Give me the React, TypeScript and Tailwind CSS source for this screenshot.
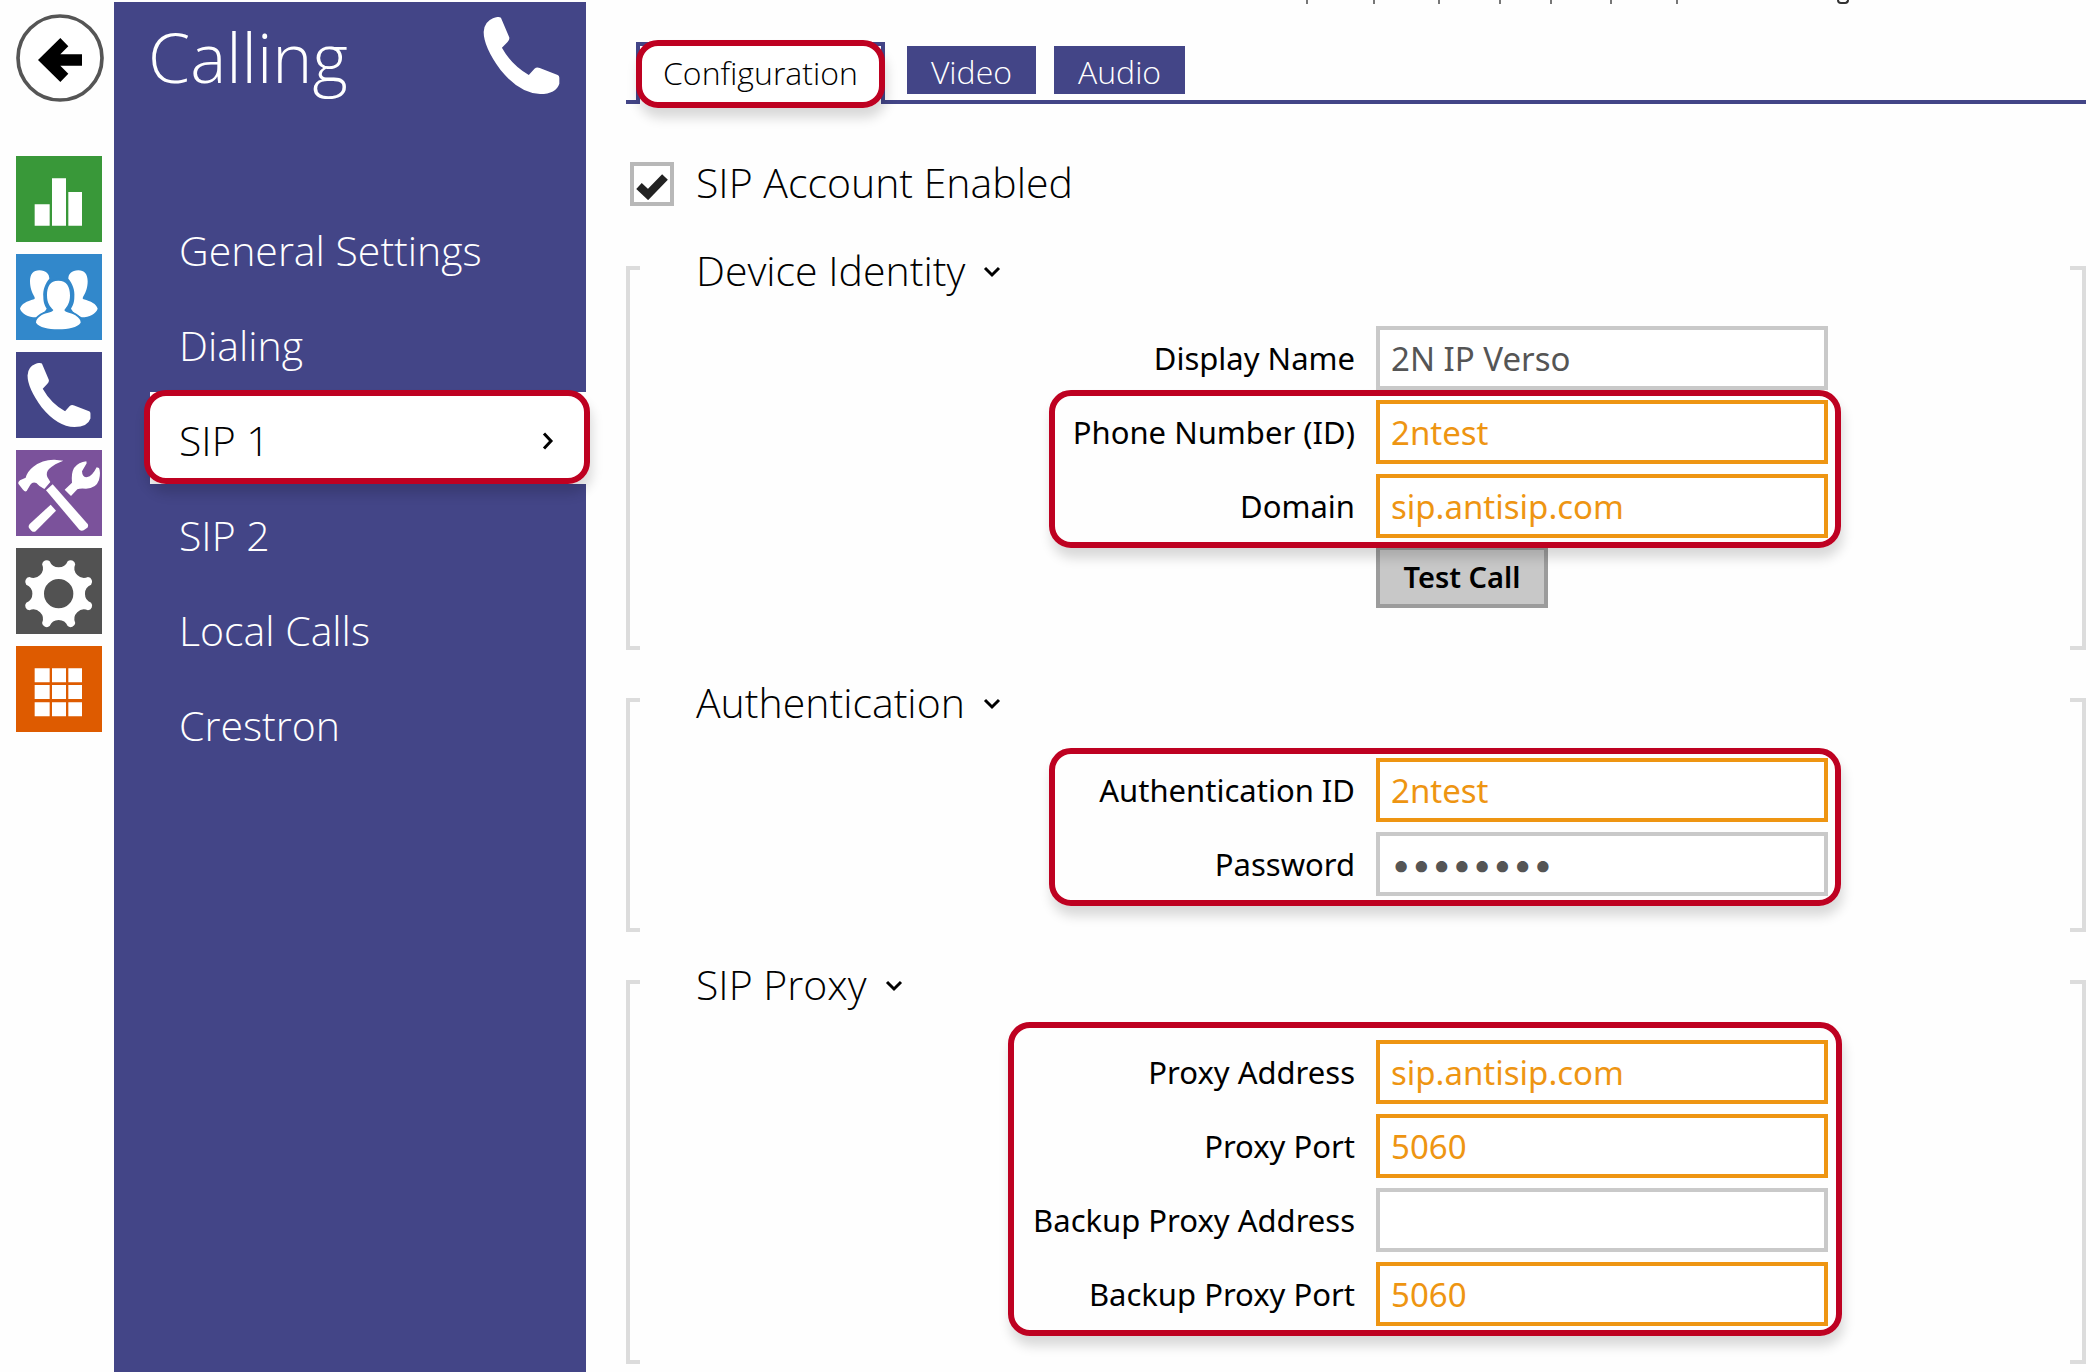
import type { ReactNode } from "react";

const PHONE_PATH =
  "M70 49 Q84 42 94 47 L119 106 Q121 113 114 120 L97 138 Q126 190 178 220 L195 201 Q202 195 211 199 L265 220 Q270 222 270 228 V246 Q260 277 212 277 Q150 275 93 205 Q42 135 42 90 Q43 60 70 49Z";

function PhoneIcon({ className }: { className: string }) {
  return (
    <svg viewBox="42 45 228 232" className={className} fill="currentColor" aria-hidden="true">
      <path d={PHONE_PATH} />
    </svg>
  );
}

function BarsIcon() {
  return (
    <svg viewBox="48 48 258 258" className="size-full" fill="#fff" aria-hidden="true">
      <path d="M104 193H149V257H104ZM156 115H198V257H156ZM205 156H246V257H205Z" />
    </svg>
  );
}

const PERSON =
  "M175 422 C200 422 210 440 210 466 C210 490 201 500 193 510 C195 518 210 516 226 526 C238 534 242 541 242 548 C232 562 206 568 175 568 C144 568 118 562 108 548 C108 541 112 534 124 526 C140 516 158 518 160 510 C150 500 141 490 141 466 C141 440 150 422 175 422Z";

const SIDE_PERSON =
  "M118 391 C138 391 148 402 148 416 C136 430 128 450 130 470 C130 486 133 494 140 506 C134 518 122 524 108 532 C84 532 66 522 60 506 C64 492 80 484 102 478 C112 474 90 462 90 424 C90 402 100 391 118 391Z";

function UsersIcon() {
  return (
    <svg viewBox="48 342 258 258" className="size-full" fill="#fff" aria-hidden="true">
      <path d={SIDE_PERSON} />
      <path d={SIDE_PERSON} transform="translate(353 0) scale(-1 1)" />
      <path d={PERSON} stroke="#3288cb" strokeWidth="12" />
      <path d={PERSON} />
    </svg>
  );
}

function ToolsIcon() {
  return (
    <svg viewBox="48 30 258 258" className="size-full" fill="#fff" aria-hidden="true">
      <path d="M55 131 Q53 126 60 121 L77 113 Q82 94 100 80 Q128 58 164 59 L190 62 Q164 71 147 87 Q137 97 142 111 L151 126 L133 147 Q118 140 109 129 Q98 124 91 134 L80 153 Q75 157 69 149Z" />
      <path d="M138 151 L158 133 L263 252 Q266 258 262 263 L251 271 Q244 274 238 269Z" />
      <path d="M152 194 L168 212 L107 274 Q101 278 94 272 L87 264 Q84 258 89 252Z" />
      <path d="M194 149 L216 128 Q213 100 222 84 Q236 66 259 64 L260 70 L246 94 Q247 114 262 111 Q276 110 290 82 L297 84 Q303 98 297 120 Q288 146 258 146 Q240 144 232 148 L213 168Z" />
    </svg>
  );
}

function polar(radius: number, degrees: number) {
  const a = (degrees * Math.PI) / 180;
  return `${(176 + radius * Math.cos(a)).toFixed(1)} ${(461 + radius * Math.sin(a)).toFixed(1)}`;
}

const GEAR_PATH =
  Array.from({ length: 8 }, (_, i) => {
    const a = 22.5 + i * 45;
    const start = i === 0 ? `M${polar(101, a - 7)}` : "";
    return `${start}A14 14 0 0 1 ${polar(101, a + 7)}A29 29 0 0 0 ${polar(101, a + 38)}`;
  }).join("") + "ZM220 461A44 44 0 1 0 132 461A44 44 0 1 0 220 461Z";

function GearIcon() {
  return (
    <svg viewBox="48 324 258 258" className="size-full" fill="#fff" fillRule="evenodd" aria-hidden="true">
      <path d={GEAR_PATH} />
    </svg>
  );
}

function GridIcon() {
  return (
    <svg viewBox="48 618 258 258" className="size-full" fill="#fff" aria-hidden="true">
      {[685, 735, 787].map((y) => (
        <path key={y} d={`M104 ${y}h45v42h-45ZM156 ${y}h42v42h-42ZM205 ${y}h41v42h-41Z`} />
      ))}
    </svg>
  );
}

function Highlight({ className }: { className: string }) {
  return (
    <span
      aria-hidden="true"
      className={`pointer-events-none absolute rounded-[22px] border-[6px] border-[#be0121] shadow-[2px_10px_12px_rgba(0,0,0,0.15)] ${className}`}
    />
  );
}

const railItems: { label: string; color: string; icon: ReactNode }[] = [
  { label: "Status", color: "bg-[#399839]", icon: <BarsIcon /> },
  { label: "Directory", color: "bg-[#3288cb]", icon: <UsersIcon /> },
  { label: "Calling", color: "bg-[#434587]", icon: <PhoneIcon className="size-16" /> },
  { label: "Services", color: "bg-[#7b529b]", icon: <ToolsIcon /> },
  { label: "System", color: "bg-[#525252]", icon: <GearIcon /> },
  { label: "Applications", color: "bg-[#de5b00]", icon: <GridIcon /> },
];

function Rail() {
  return (
    <nav aria-label="Sections" className="flex w-[114px] shrink-0 flex-col gap-3 pt-3.5 pl-4">
      <button type="button" aria-label="Back" className="mb-[42px] size-[88px]">
        <svg viewBox="48 42 264 264" className="size-full" aria-hidden="true">
          <circle cx="180" cy="174" r="126" fill="#fff" stroke="#555" strokeWidth="11" />
          <path d="M114 180 L181 114 L205 139 L181 163 H246 V197 H181 L205 221 L181 246Z" />
        </svg>
      </button>
      {railItems.map((item) => (
        <a
          key={item.label}
          href="#"
          aria-label={item.label}
          className={`flex size-[86px] items-center justify-center text-white ${item.color}`}
        >
          {item.icon}
        </a>
      ))}
    </nav>
  );
}

const menu = ["General Settings", "Dialing", "SIP 1", "SIP 2", "Local Calls", "Crestron"];

function Sidebar() {
  return (
    <aside className="mt-0.5 w-[472px] shrink-0 bg-[#434587] font-light text-white">
      <header className="flex h-[106px] items-center justify-between pr-[26px] pl-[34px]">
        <h1 className="pt-1 text-[68px] leading-none">Calling</h1>
        <PhoneIcon className="size-[77px]" />
      </header>
      <nav aria-label="Calling" className="mt-[94px] ml-9 flex flex-col gap-[3px] text-[41px]">
        {menu.map((item) =>
          item === "SIP 1" ? (
            <a
              key={item}
              href="#"
              aria-current="page"
              className="relative flex h-[92px] items-center justify-between bg-white pt-1.5 pr-8 pl-[29px] text-black"
            >
              {item}
              <svg viewBox="0 0 12 18" className="h-[18px] w-3" fill="none" stroke="#000" strokeWidth="3" aria-hidden="true">
                <path d="M2 1.5L9 9L2 16.5" />
              </svg>
              <Highlight className="top-[-2px] right-[-4px] bottom-0 left-[-6px]" />
            </a>
          ) : (
            <a key={item} href="#" className="flex h-[92px] items-center pt-1.5 pl-[29px]">
              {item}
            </a>
          ),
        )}
      </nav>
    </aside>
  );
}

function Tabs() {
  return (
    <nav
      aria-label="SIP 1"
      className="mt-[38px] flex h-[62px] items-start border-b-4 border-[#434587] pl-2.5 text-[32px] font-light"
    >
      <a
        href="#"
        aria-current="page"
        className="relative mr-[22px] flex h-[62px] items-center border-x-4 border-t-4 border-[#434587] bg-white px-[23px] pb-1"
      >
        Configuration
        <Highlight className="-inset-x-1 top-[-6px] bottom-[-4px]" />
      </a>
      <a href="#" className="mt-1 mr-[18px] flex h-12 items-center bg-[#434587] px-6 pt-1 text-white">
        Video
      </a>
      <a href="#" className="mt-1 flex h-12 items-center bg-[#434587] px-6 pt-1 text-white">
        Audio
      </a>
    </nav>
  );
}

function Section({ title, className, children }: { title: string; className: string; children: ReactNode }) {
  return (
    <section className="flex">
      <div className="w-3.5 shrink-0 border-y-4 border-l-4 border-[#dcdcdc]" />
      <div className={`flex-1 ${className}`}>
        <h2 className="mt-[-16px] mb-9 flex items-center gap-[18px] pl-14 text-[41px] leading-10 font-light">
          {title}
          <svg viewBox="0 0 18 12" className="mt-1 h-3 w-[18px]" fill="none" stroke="#000" strokeWidth="3" aria-hidden="true">
            <path d="M2 2L9 9L16 2" />
          </svg>
        </h2>
        {children}
      </div>
      <div className="w-4 shrink-0 border-y-4 border-r-4 border-[#dcdcdc]" />
    </section>
  );
}

function Field({ id, label, value, type = "text", changed = false }: {
  id: string;
  label: string;
  value: string;
  type?: string;
  changed?: boolean;
}) {
  return (
    <div className="flex font-['Noto_Sans',sans-serif]">
      <label htmlFor={id} className="w-1/2 text-right text-[31px] leading-[64px]">
        {label}
      </label>
      <input
        id={id}
        type={type}
        defaultValue={value}
        className={`ml-[21px] h-16 w-[452px] border-4 bg-white px-[11px] outline-none ${
          type === "password" ? "font-['Inter',sans-serif] text-[36px]" : "text-[33px]"
        } ${changed ? "border-[#ee9512] text-[#ee9512]" : "border-[#c9c9c9] text-[#555]"}`}
      />
    </div>
  );
}

function FieldGroup({ frame, children }: { frame: string; children: ReactNode }) {
  return (
    <div className="relative flex flex-col gap-2.5">
      {children}
      <Highlight className={frame} />
    </div>
  );
}

function CutOffText() {
  return (
    <div aria-hidden="true" className="flex h-1 overflow-hidden pl-[680px]">
      {["mr-[65px]", "mr-[63px]", "mr-[59px]", "mr-[49px]", "mr-[58px]", "mr-[64px]", "mr-[159px]"].map((gap) => (
        <span key={gap} className={`w-0.5 bg-[#777] ${gap}`} />
      ))}
      <span className="h-1 w-3 rounded-b-md border-x-2 border-b-2 border-[#333]" />
    </div>
  );
}

export default function App() {
  return (
    <div className="flex min-h-screen bg-[#fefefe] font-['Open_Sans',sans-serif] text-black">
      <Rail />
      <Sidebar />
      <main className="min-w-0 flex-1 pr-3.5 pb-2 pl-10">
        <CutOffText />
        <Tabs />
        <div className="mt-[58px] flex h-11 items-center gap-[22px] pl-1">
          <span className="relative size-11">
            <input
              id="sip-enabled"
              type="checkbox"
              defaultChecked
              className="peer block size-11 appearance-none border-4 border-[#b8b8b8] bg-white"
            />
            <svg
              viewBox="0 0 32 26"
              className="pointer-events-none absolute top-3 left-1.5 hidden h-[26px] w-8 peer-checked:block"
              fill="none"
              stroke="#222"
              strokeWidth="8"
              aria-hidden="true"
            >
              <path d="M3 12L12 20.500L29 3" />
            </svg>
          </span>
          <label htmlFor="sip-enabled" className="pb-1 text-[41px] leading-10 font-light">
            SIP Account Enabled
          </label>
        </div>
        <div className="mt-[60px] flex flex-col gap-12">
          <Section title="Device Identity" className="pb-[42px]">
            <Field id="display-name" label="Display Name" value="2N IP Verso" />
            <div className="h-2.5" />
            <FieldGroup frame="-inset-y-2.5 left-[calc(50%-306px)] w-[792px]">
              <Field id="phone-number" label="Phone Number (ID)" value="2ntest" changed />
              <Field id="domain" label="Domain" value="sip.antisip.com" changed />
            </FieldGroup>
            <div className="flex">
              <button
                type="button"
                className="mt-2 ml-[calc(50%+21px)] h-[62px] w-[172px] border-4 border-[#9c9c9c] bg-[#c8c8c8] font-['Noto_Sans',sans-serif] text-[29px] font-semibold"
              >
                Test Call
              </button>
            </div>
          </Section>
          <Section title="Authentication" className="pb-9">
            <FieldGroup frame="-inset-y-2.5 left-[calc(50%-306px)] w-[792px]">
              <Field id="auth-id" label="Authentication ID" value="2ntest" changed />
              <Field id="password" label="Password" value="password" type="password" />
            </FieldGroup>
          </Section>
          <Section title="SIP Proxy" className="pb-[38px]">
            <FieldGroup frame="top-[-18px] bottom-[-10px] left-[calc(50%-347px)] w-[834px]">
              <Field id="proxy-address" label="Proxy Address" value="sip.antisip.com" changed />
              <Field id="proxy-port" label="Proxy Port" value="5060" changed />
              <Field id="backup-address" label="Backup Proxy Address" value="" />
              <Field id="backup-port" label="Backup Proxy Port" value="5060" changed />
            </FieldGroup>
          </Section>
        </div>
      </main>
    </div>
  );
}
